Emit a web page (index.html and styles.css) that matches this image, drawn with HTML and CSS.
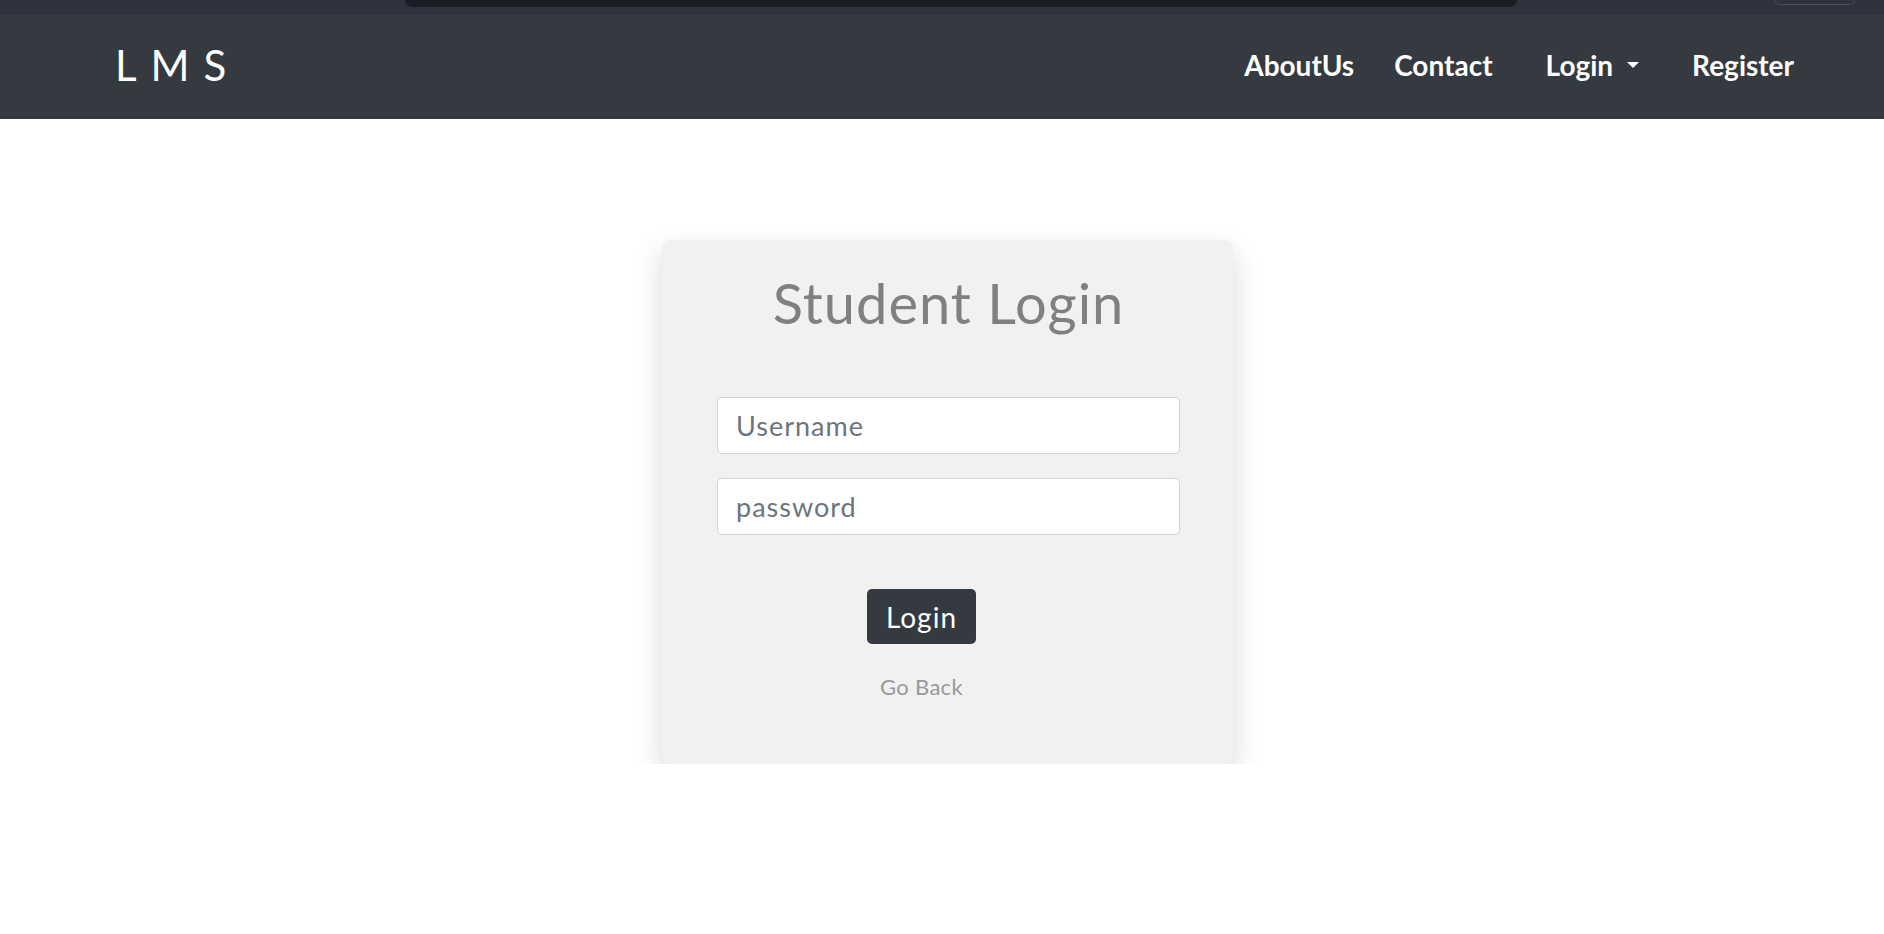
FILE: index.html
```html
<!DOCTYPE html>
<html lang="en">
<head>
<meta charset="utf-8">
<title>LMS - Student Login</title>
<link rel="stylesheet" href="styles.css">
</head>
<body>
<div class="topstrip">
  <div class="tab"></div>
  <div class="pill"></div>
</div>
<nav class="navbar">
  <a class="brand" href="#">LMS</a>
  <ul class="nav-links">
    <li><a href="#">AboutUs</a></li>
    <li><a href="#">Contact</a></li>
    <li><a href="#" class="dropdown">Login <span class="caret"></span></a></li>
    <li><a href="#">Register</a></li>
  </ul>
</nav>
<main class="page">
  <div class="card">
    <h1 class="title">Student Login</h1>
    <form class="form">
      <input class="field" type="text" placeholder="Username">
      <input class="field" type="password" placeholder="password">
      <div class="actions">
        <button class="btn" type="button">Login</button>
        <a class="back" href="#">Go Back</a>
      </div>
    </form>
  </div>
</main>
</body>
</html>
```

FILE: styles.css
```css
* { box-sizing: border-box; }
body {
  margin: 0;
  font-family: Lato, "Noto Sans", sans-serif;
  background: #ffffff;
}
.topstrip {
  height: 15px;
  background: #30333f;
  display: flex;
  align-items: flex-start;
}
.tab {
  margin-left: 405px;
  width: 1112px;
  height: 7px;
  background: #1b1d24;
  border-radius: 0 0 8px 8px;
}
.pill {
  margin-left: 258px;
  width: 80px;
  height: 5px;
  border: 1px solid #4a4d5a;
  border-top: none;
  border-radius: 0 0 8px 8px;
}
.navbar {
  height: 104px;
  background: #343a40;
  display: flex;
  align-items: center;
  justify-content: space-between;
  padding: 0 70px 0 115px;
}
.brand {
  color: #ffffff;
  text-decoration: none;
  font-size: 42px;
  font-weight: 400;
  letter-spacing: 14px;
  margin-top: -4px;
}
.nav-links {
  list-style: none;
  margin: 0;
  padding: 0;
  display: flex;
  align-items: center;
}
.nav-links a {
  display: flex;
  align-items: center;
  color: #ffffff;
  text-decoration: none;
  font-size: 28px;
  font-weight: 700;
  padding: 8px 20px;
  margin-top: -4px;
}
.nav-links .dropdown { padding-left: 33px; padding-right: 33px; }
.caret {
  display: inline-block;
  margin-left: 14px;
  width: 0;
  height: 0;
  border-left: 6px solid transparent;
  border-right: 6px solid transparent;
  border-top: 6px solid #ffffff;
}
.page {
  display: flex;
  justify-content: center;
  padding: 121px 0 0 11px;
}
.card {
  width: 571px;
  height: 524px;
  background: #f1f1f1;
  border-radius: 8px;
  box-shadow: 0 12px 28px rgba(0, 0, 0, 0.16);
  padding: 29px 53px 0 55px;
}
.title {
  margin: 0;
  text-align: center;
  font-size: 56px;
  font-weight: 400;
  letter-spacing: 1px;
  color: #808080;
  line-height: 1.2;
}
.form {
  margin-top: 61px;
  display: flex;
  flex-direction: column;
}
.field {
  width: 463px;
  height: 57px;
  border: 1px solid #ced4da;
  border-radius: 5px;
  background: #ffffff;
  padding: 0 18px;
  font-family: inherit;
  font-size: 27px;
  letter-spacing: 1px;
  color: #495057;
  margin-bottom: 24px;
}
.field::placeholder { color: #6c757d; }
.actions {
  display: flex;
  flex-direction: column;
  align-items: center;
  padding-right: 54px;
  margin-top: 30px;
}
.btn {
  width: 109px;
  height: 55px;
  background: #343a40;
  color: #ffffff;
  border: none;
  border-radius: 5px;
  font-family: inherit;
  font-size: 28px;
  letter-spacing: 1px;
}
.back {
  margin-top: 29px;
  color: #999999;
  text-decoration: none;
  font-size: 22px;
  letter-spacing: 0.3px;
}
```
